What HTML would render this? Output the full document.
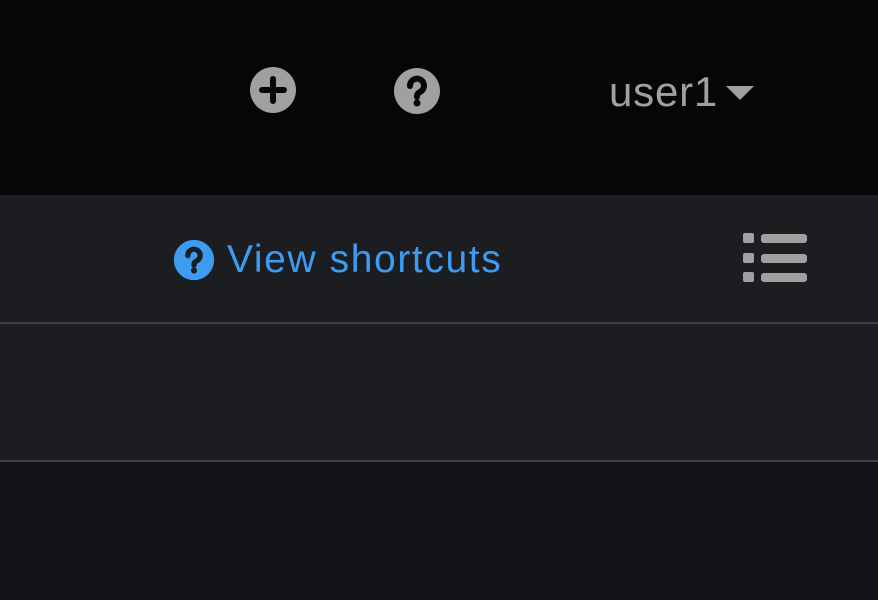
<!DOCTYPE html>
<html><head><style>
body{margin:0;width:878px;height:600px;overflow:hidden;background:#121316;font-family:"Liberation Sans",sans-serif;position:relative}
.a{position:absolute}
</style></head><body>
<div class="a" style="left:0;top:0;width:878px;height:195px;background:#060606"></div>
<div class="a" style="left:0;top:195px;width:878px;height:127px;background:#1b1d21"></div>
<div class="a" style="left:0;top:322px;width:878px;height:2px;background:#3d3f42"></div>
<div class="a" style="left:0;top:324px;width:878px;height:136px;background:#1b1d21"></div>
<div class="a" style="left:0;top:460px;width:878px;height:2px;background:#3d3f42"></div>
<svg class="a" style="left:249px;top:66px" width="48" height="48" viewBox="0 0 48 48"><circle cx="24" cy="24" r="23" fill="#a0a0a0"/><path d="M24 13v22M13 24h22" stroke="#060606" stroke-width="6" stroke-linecap="round"/></svg>
<svg class="a" style="left:393px;top:67px" width="48" height="48" viewBox="0 0 48 48"><circle cx="24" cy="24" r="23" fill="#a0a0a0"/><path d="M17 19a7 7 0 1 1 10 6c-2 1-3 2-3 4v1" stroke="#060606" stroke-width="6" fill="none" stroke-linecap="round"/><circle cx="24" cy="36" r="3.5" fill="#060606"/></svg>
<div class="a" style="left:609px;top:66px;font-size:42px;color:#a0a0a0;line-height:52px;letter-spacing:0.8px">user1</div>
<svg class="a" style="left:726px;top:85px" width="28" height="16"><path d="M0 1h28L14 15z" fill="#a0a0a0"/></svg>
<svg class="a" style="left:173px;top:239px" width="42" height="42" viewBox="0 0 48 48"><circle cx="24" cy="24" r="23" fill="#3d9bf2"/><path d="M17 19a7 7 0 1 1 10 6c-2 1-3 2-3 4v1" stroke="#1b1d21" stroke-width="6" fill="none" stroke-linecap="round"/><circle cx="24" cy="36" r="3.5" fill="#1b1d21"/></svg>
<div class="a" style="left:227px;top:236px;font-size:39px;color:#3d9bf2;line-height:48px;letter-spacing:1.6px">View shortcuts</div>
<svg class="a" style="left:742px;top:232px" width="66" height="52"><g fill="#a0a0a0"><rect x="1" y="1" width="11" height="10" rx="2"/><rect x="1" y="21" width="11" height="10" rx="2"/><rect x="1" y="40" width="11" height="10" rx="2"/><rect x="19" y="2" width="46" height="9" rx="3"/><rect x="19" y="22" width="46" height="9" rx="3"/><rect x="19" y="41" width="46" height="9" rx="3"/></g></svg>
</body></html>
